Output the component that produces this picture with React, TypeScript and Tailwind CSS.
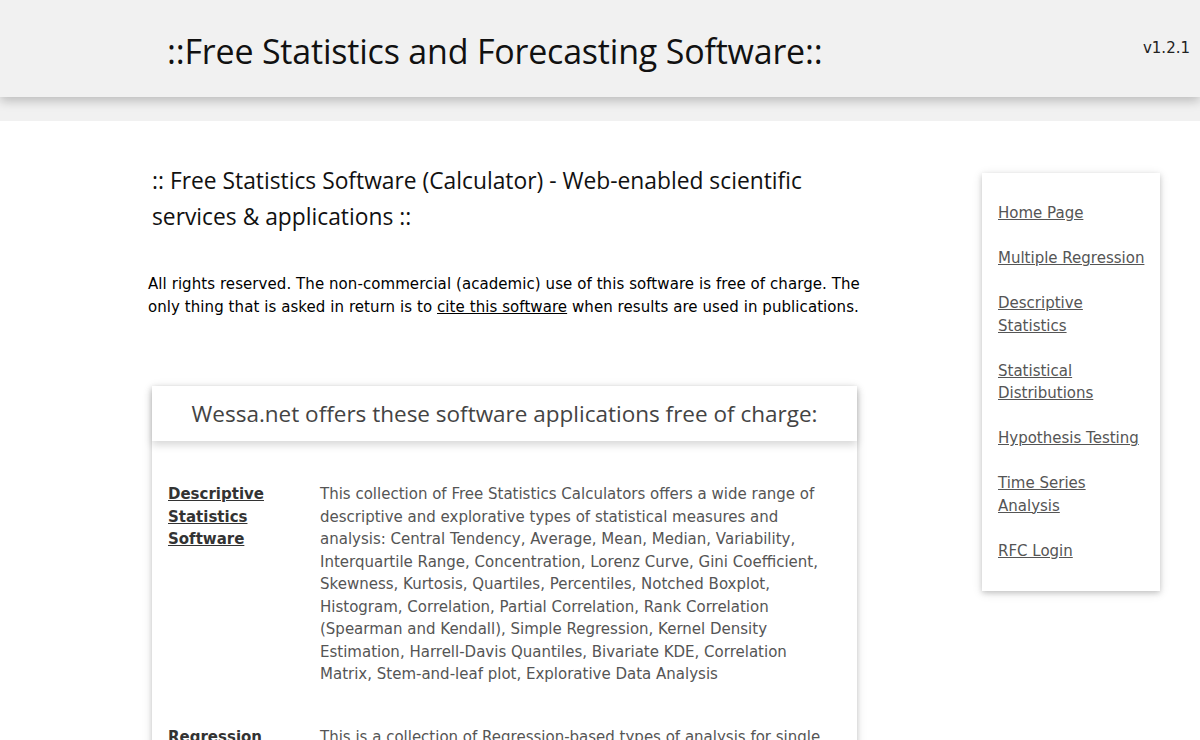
const body = "font-['DejaVu_Sans','Verdana',sans-serif] text-[15px] leading-[22.5px]";
const head = "font-['Open_Sans','Noto_Sans',sans-serif]";

const navLinks = [
  "Home Page",
  "Multiple Regression",
  "Descriptive Statistics",
  "Statistical Distributions",
  "Hypothesis Testing",
  "Time Series Analysis",
  "RFC Login",
];

const apps = [
  {
    title: "Descriptive Statistics Software",
    text: "This collection of Free Statistics Calculators offers a wide range of descriptive and explorative types of statistical measures and analysis: Central Tendency, Average, Mean, Median, Variability, Interquartile Range, Concentration, Lorenz Curve, Gini Coefficient, Skewness, Kurtosis, Quartiles, Percentiles, Notched Boxplot, Histogram, Correlation, Partial Correlation, Rank Correlation (Spearman and Kendall), Simple Regression, Kernel Density Estimation, Harrell-Davis Quantiles, Bivariate KDE, Correlation Matrix, Stem-and-leaf plot, Explorative Data Analysis",
  },
  {
    title: "Regression Software",
    text: "This is a collection of Regression-based types of analysis for single and multiple equation models, including Multiple Linear Regression, Trend Analysis and Forecasting.",
  },
];

export default function App() {
  return (
    <div className="min-h-screen bg-white text-black">
      {/* Top bar */}
      <header className="relative z-10 flex h-[97px] items-center justify-between bg-[#f1f1f1] pl-[167px] pr-[10px] shadow-[0_4px_10px_rgba(0,0,0,0.22)]">
        <h1 className={`${head} pt-[4px] text-[34px] leading-none tracking-[-0.2px] text-[#111]`}>
          ::Free Statistics and Forecasting Software::
        </h1>
        <span className={`${body} text-[14px] text-[#222]`}>v1.2.1</span>
      </header>

      <div className="h-[24px] bg-[#f1f1f1]" />

      <main className="flex items-start bg-white">
        {/* Main column */}
        <div className="ml-[148px] w-[714px] pt-[42px]">
          <h2 className={`${head} w-[680px] pl-[4px] text-[22.8px] leading-[36px] text-[#111]`}>
            :: Free Statistics Software (Calculator) - Web-enabled scientific services &amp; applications ::
          </h2>

          <p className={`${body} mt-[38px] tracking-[0.07px] text-black`}>
            All rights reserved. The non-commercial (academic) use of this software is free of charge. The
            only thing that is asked in return is to <a className="underline">cite this software</a> when
            results are used in publications.
          </p>

          <section className="ml-[4px] mt-[68px] w-[705px] bg-white shadow-[0_2px_5px_rgba(0,0,0,0.16),0_2px_10px_rgba(0,0,0,0.12)]">
            <div className="relative z-10 flex h-[55px] items-center justify-center bg-white shadow-[0_4px_8px_rgba(0,0,0,0.16)]">
              <h3 className={`${head} text-[22.5px] text-[#444]`}>
                Wessa.net offers these software applications free of charge:
              </h3>
            </div>
            <div className="flex flex-col gap-[40px] px-[16px] pt-[42px] pb-[40px]">
              {apps.map((a) => (
                <div key={a.title} className={`${body} flex`}>
                  <a className="w-[152px] shrink-0 pr-[12px] font-bold text-[#333] underline">{a.title}</a>
                  <p className="text-[#555]">{a.text}</p>
                </div>
              ))}
            </div>
          </section>
        </div>

        {/* Side navigation */}
        <nav className="ml-[120px] mt-[52px] flex w-[178px] flex-col gap-[22.5px] bg-white py-[29px] pl-[16px] pr-[10px] shadow-[0_2px_5px_rgba(0,0,0,0.16),0_2px_10px_rgba(0,0,0,0.12)]">
          {navLinks.map((l) => (
            <a key={l} className={`${body} text-[#555] underline`}>
              {l}
            </a>
          ))}
        </nav>
      </main>
    </div>
  );
}
